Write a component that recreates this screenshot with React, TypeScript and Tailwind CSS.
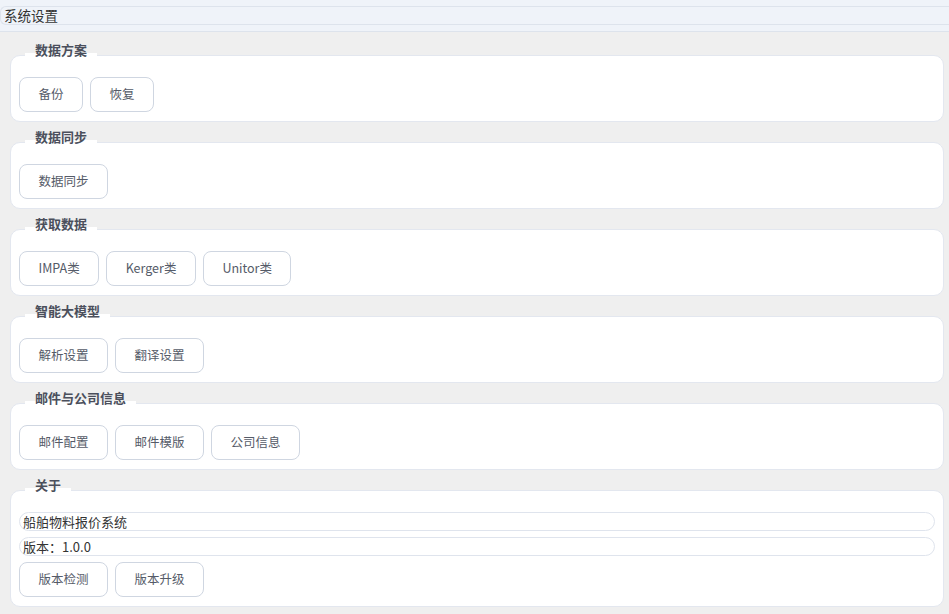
import React from 'react';

const font = { fontFamily: '"Noto Sans CJK SC", "Noto Sans", sans-serif' };

function Btn({ label }: { label: string }) {
  return (
    <button className="h-[35px] px-[18.5px] rounded-[8px] border border-[#cfd6e1] bg-white text-[12.5px] text-[#555b68] leading-none">
      {label}
    </button>
  );
}

function Section({ title, children }: { title: string; children: React.ReactNode }) {
  return (
    <div className="flex flex-col">
      <div className="relative z-10 ml-[15px] w-fit h-[16px] px-[10px] text-[13px] font-bold leading-[16px] text-[#4b4f5c] bg-[linear-gradient(transparent_11px,white_11px)]">
        {title}
      </div>
      <div className="-mt-[3px] rounded-[10px] border border-[#e3e7ef] bg-white px-[8px] pt-[21px] pb-[9px]">
        {children}
      </div>
    </div>
  );
}

const groups: { title: string; buttons: string[] }[] = [
  { title: '数据方案', buttons: ['备份', '恢复'] },
  { title: '数据同步', buttons: ['数据同步'] },
  { title: '获取数据', buttons: ['IMPA类', 'Kerger类', 'Unitor类'] },
  { title: '智能大模型', buttons: ['解析设置', '翻译设置'] },
  { title: '邮件与公司信息', buttons: ['邮件配置', '邮件模版', '公司信息'] },
];

export default function App() {
  return (
    <div className="w-[949px] h-[614px] overflow-hidden bg-[#efefef]" style={font}>
      {/* header */}
      <div className="h-[32px] pt-[6px] bg-[#eff3f9] border-b border-[#dde3ec]">
        <div className="h-[19px] pl-[3px] rounded-l-[6px] border border-r-0 border-[#dde3ec] text-[13.5px] leading-[17px] text-[#333]">
          系统设置
        </div>
      </div>

      <div className="flex flex-col gap-[7px] pt-[10px] ml-[10px] mr-[5px]">
        {groups.map((g) => (
          <Section key={g.title} title={g.title}>
            <div className="flex gap-[7px]">
              {g.buttons.map((b) => (
                <Btn key={b} label={b} />
              ))}
            </div>
          </Section>
        ))}
        <Section title="关于">
          <div className="flex flex-col gap-[6px]">
            <div className="h-[19px] rounded-full border border-[#dfe4ed] pl-[3px] text-[13px] leading-[17px] text-[#333]">
              船舶物料报价系统
            </div>
            <div className="h-[19px] rounded-full border border-[#dfe4ed] pl-[3px] text-[13px] leading-[17px] text-[#333]">
              版本：1.0.0
            </div>
            <div className="flex gap-[7px]">
              <Btn label="版本检测" />
              <Btn label="版本升级" />
            </div>
          </div>
        </Section>
      </div>
    </div>
  );
}
